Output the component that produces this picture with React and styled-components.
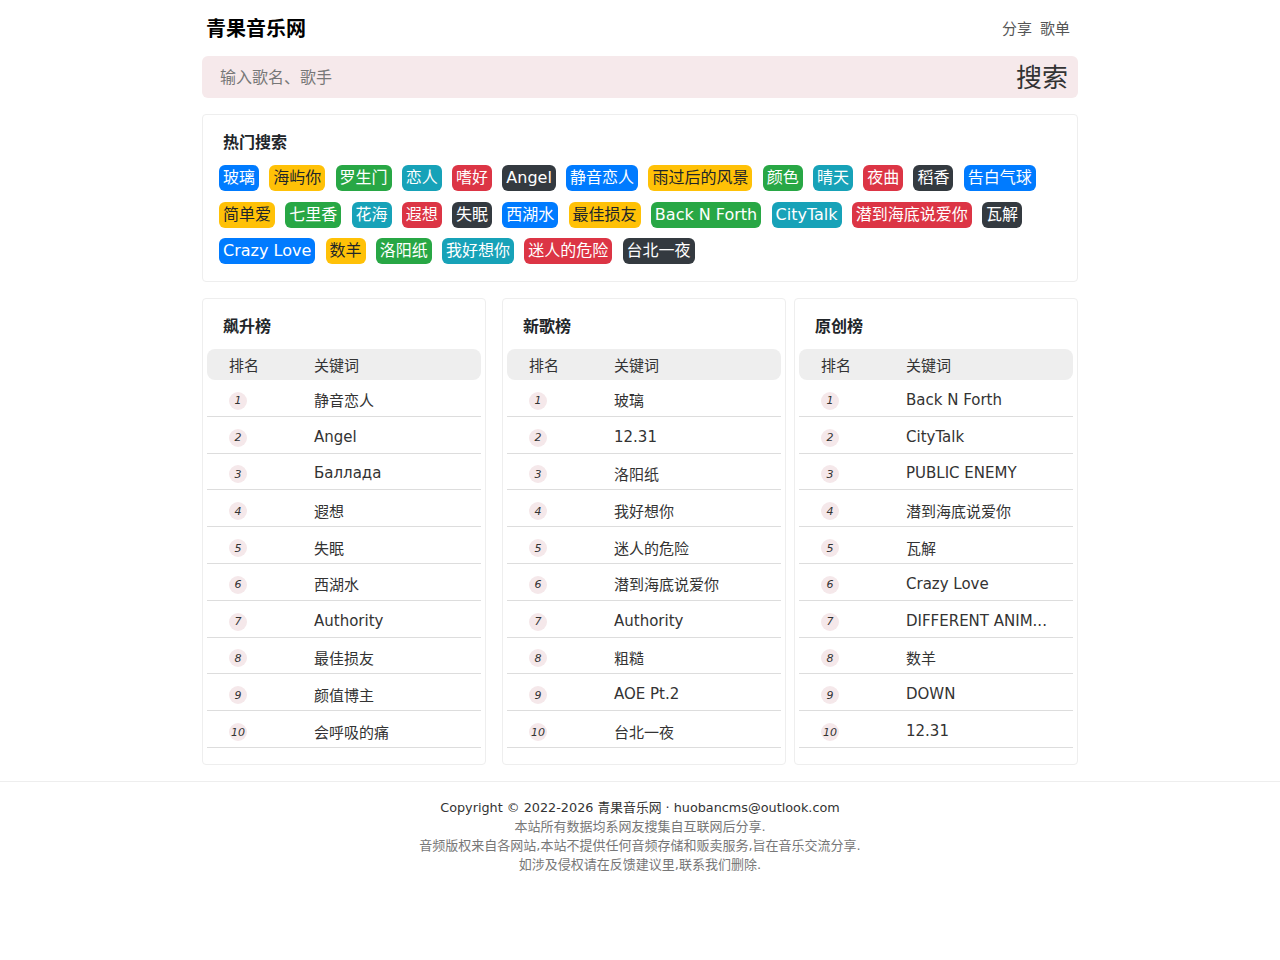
import styled, { createGlobalStyle } from "styled-components";

const GlobalStyle = createGlobalStyle`
  * { box-sizing: border-box; }
  body {
    margin: 0;
    background: #fff;
    color: #212529;
    font-family: "DejaVu Sans", "Noto Sans CJK SC", sans-serif;
  }
`;

const Container = styled.div`
  width: 876px;
  margin: 0 auto;
`;

const Header = styled.header`
  height: 56px;
  display: flex;
  align-items: center;
  justify-content: space-between;
  padding: 0 8px 1px 4px;
`;

const Logo = styled.h1`
  margin: 0;
  font-size: 20px;
  font-weight: bold;
  color: #000;
`;

const NavLinks = styled.nav`
  display: flex;
  gap: 8px;
  a {
    font-size: 15px;
    color: #555;
    text-decoration: none;
  }
`;

const SearchBar = styled.form`
  height: 42px;
  display: flex;
  align-items: center;
  background: #f6e9eb;
  border-radius: 6px;
  padding: 0 10px 0 18px;
`;

const SearchInput = styled.input`
  flex: 1;
  border: none;
  padding: 0;
  background: transparent;
  outline: none;
  font: inherit;
  font-size: 16px;
  color: #333;
  &::placeholder { color: #777; }
`;

const SearchButton = styled.button`
  border: none;
  background: transparent;
  padding: 0 0 4px;
  font: inherit;
  font-size: 26px;
  color: #333;
  cursor: pointer;
`;

const Card = styled.section`
  border: 1px solid #eee;
  border-radius: 4px;
  background: #fff;
`;

const HotCard = styled(Card)`
  margin-top: 16px;
  padding: 16px 16px 17px;
`;

const CardTitle = styled.h3`
  margin: 0 0 10px;
  padding-left: ${(p) => p.$indent || "4px"};
  font-size: 16px;
  line-height: 24px;
  font-weight: bold;
  color: #212529;
`;

const TagList = styled.div`
  display: flex;
  flex-wrap: wrap;
  column-gap: 10.25px;
  row-gap: 10.5px;
`;

const tagColors = [
  ["#007bff", "#fff"],
  ["#ffc107", "#212529"],
  ["#28a745", "#fff"],
  ["#17a2b8", "#fff"],
  ["#dc3545", "#fff"],
  ["#343a40", "#fff"],
];

const Tag = styled.a`
  display: inline-block;
  height: 26px;
  line-height: 26px;
  padding: 0 4px;
  border-radius: 6px;
  font-size: 16px;
  text-decoration: none;
  background: ${(p) => tagColors[p.$tone][0]};
  color: ${(p) => tagColors[p.$tone][1]};
`;

const Charts = styled.div`
  margin-top: 16px;
  display: flex;
`;

const ChartCard = styled(Card)`
  width: 284px;
  padding: 16px 4px 16px;
  margin-right: ${(p) => p.$after || 0}px;
`;

const TableHead = styled.div`
  display: grid;
  grid-template-columns: 85px 1fr;
  height: 31px;
  align-items: center;
  background: #eee;
  border-radius: 8px;
  font-size: 15px;
  color: #333;
  span { padding-left: 22px; }
`;

const Row = styled.div`
  display: grid;
  grid-template-columns: 85px 1fr;
  height: 36.8px;
  align-items: center;
  border-bottom: 1px solid #ddd;
  padding-top: 4px;
  font-size: 15px;
  color: #333;
`;

const RankCell = styled.div`
  padding-left: 22px;
  padding-top: 2px;
`;

const Rank = styled.i`
  display: flex;
  align-items: center;
  justify-content: center;
  width: 18px;
  height: 18px;
  border-radius: 50%;
  background: #f5e8ea;
  font-size: 11px;
  color: #333;
`;

const Keyword = styled.div`
  padding-left: 22px;
  white-space: nowrap;
`;

const Footer = styled.footer`
  margin-top: 16px;
  border-top: 1px solid #eee;
  padding: 16px 0 40px;
  text-align: center;
  font-size: 13px;
  line-height: 19px;
  color: #777;
`;

const Copyright = styled.div`
  font-size: 12.8px;
  color: #333;
`;

const hotTags = [
  "玻璃", "海屿你", "罗生门", "恋人", "嗜好", "Angel", "静音恋人", "雨过后的风景",
  "颜色", "晴天", "夜曲", "稻香", "告白气球", "简单爱", "七里香", "花海", "遐想",
  "失眠", "西湖水", "最佳损友", "Back N Forth", "CityTalk", "潜到海底说爱你", "瓦解",
  "Crazy Love", "数羊", "洛阳纸", "我好想你", "迷人的危险", "台北一夜",
];

const charts = [
  {
    title: "飙升榜",
    after: 16,
    items: ["静音恋人", "Angel", "Баллада", "遐想", "失眠", "西湖水", "Authority", "最佳损友", "颜值博主", "会呼吸的痛"],
  },
  {
    title: "新歌榜",
    after: 8,
    items: ["玻璃", "12.31", "洛阳纸", "我好想你", "迷人的危险", "潜到海底说爱你", "Authority", "粗糙", "AOE Pt.2", "台北一夜"],
  },
  {
    title: "原创榜",
    after: 0,
    items: ["Back N Forth", "CityTalk", "PUBLIC ENEMY", "潜到海底说爱你", "瓦解", "Crazy Love", "DIFFERENT ANIMALS", "数羊", "DOWN", "12.31"],
  },
];

const shorten = (text) => (text.length > 14 ? text.slice(0, 14) + "..." : text);

const App = () => {
  return (
    <>
      <GlobalStyle />
      <Container>
        <Header>
          <Logo>青果音乐网</Logo>
          <NavLinks>
            <a href="#">分享</a>
            <a href="#">歌单</a>
          </NavLinks>
        </Header>

        <SearchBar onSubmit={(e) => e.preventDefault()}>
          <SearchInput placeholder="输入歌名、歌手" />
          <SearchButton type="submit">搜索</SearchButton>
        </SearchBar>

        <HotCard>
          <CardTitle>热门搜索</CardTitle>
          <TagList>
            {hotTags.map((tag, i) => (
              <Tag key={tag} href="#" $tone={i % 6}>
                {tag}
              </Tag>
            ))}
          </TagList>
        </HotCard>

        <Charts>
          {charts.map((chart) => (
            <ChartCard key={chart.title} $after={chart.after}>
              <CardTitle $indent="16px">{chart.title}</CardTitle>
              <TableHead>
                <span>排名</span>
                <span>关键词</span>
              </TableHead>
              {chart.items.map((item, i) => (
                <Row key={i}>
                  <RankCell>
                    <Rank>{i + 1}</Rank>
                  </RankCell>
                  <Keyword>{shorten(item)}</Keyword>
                </Row>
              ))}
            </ChartCard>
          ))}
        </Charts>
      </Container>

      <Footer>
        <Copyright>Copyright © 2022-2026 青果音乐网 · huobancms@outlook.com</Copyright>
        <div>本站所有数据均系网友搜集自互联网后分享.</div>
        <div>音频版权来自各网站,本站不提供任何音频存储和贩卖服务,旨在音乐交流分享.</div>
        <div>如涉及侵权请在反馈建议里,联系我们删除.</div>
      </Footer>
    </>
  );
};

export default App;
